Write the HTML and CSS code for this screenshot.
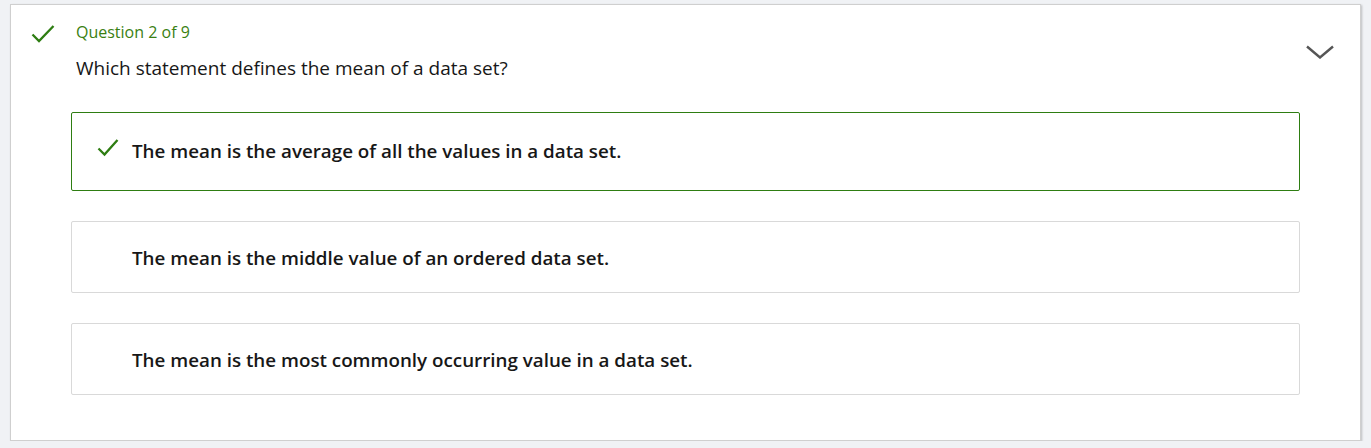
FILE: index.html
```html
<!DOCTYPE html>
<html lang="en">
<head>
<meta charset="utf-8">
<title>Question 2 of 9</title>
<link rel="stylesheet" href="styles.css">
</head>
<body>
<div class="card">
  <div class="head">
    <svg class="check-big" width="24" height="20" viewBox="0 0 24 20" aria-hidden="true">
      <path d="M1.5 10.5 L8 17 L22.5 2" fill="none" stroke="#2e7d12" stroke-width="2.3"/>
    </svg>
    <div class="qtext">
      <div class="label">Question 2 of 9</div>
      <div class="question">Which statement defines the mean of a data set?</div>
    </div>
    <svg class="chevron" width="28" height="14" viewBox="0 0 28 14" aria-hidden="true">
      <path d="M1 1.5 L14 12.5 L27 1.5" fill="none" stroke="#555" stroke-width="2.4"/>
    </svg>
  </div>
  <div class="options">
    <div class="option correct">
      <svg class="check-small" width="22" height="20" viewBox="0 0 22 20" aria-hidden="true">
        <path d="M1.5 10.5 L7.5 16.5 L20.5 2" fill="none" stroke="#2e7d12" stroke-width="2.3"/>
      </svg>
      <span class="otext">The mean is the average of all the values in a data set.</span>
    </div>
    <div class="option">
      <span class="otext">The mean is the middle value of an ordered data set.</span>
    </div>
    <div class="option">
      <span class="otext">The mean is the most commonly occurring value in a data set.</span>
    </div>
  </div>
</div>
</body>
</html>
```

FILE: styles.css
```css
html, body {
  margin: 0;
  padding: 0;
  background: #f0f2f5;
}
body {
  font-family: "Open Sans", "Noto Sans", "Liberation Sans", sans-serif;
  color: #171717;
  padding: 4px 10px 0 10px;
}
.card {
  background: #fff;
  border: 1px solid #cfcfcf;
  box-shadow: 1px 1px 2px rgba(0,0,0,0.22);
  padding: 16px 26px 45px 20px;
  height: 437px;
  box-sizing: border-box;
}
.head {
  display: flex;
  align-items: flex-start;
}
.check-big {
  flex: none;
  margin-top: 3px;
  margin-right: 21px;
}
.qtext {
  flex: 1;
}
.label {
  color: #3a7f12;
  font-size: 16px;
  line-height: 22px;
}
.question {
  font-size: 19px;
  line-height: 26px;
  margin-top: 12px;
}
.chevron {
  flex: none;
  margin-top: 24px;
}
.options {
  margin: 31px 34px 0 40px;
  display: flex;
  flex-direction: column;
  gap: 30px;
}
.option {
  border: 1px solid #d9d9d9;
  border-radius: 2px;
  padding: 23px 20px 21px 60px;
  display: flex;
  align-items: center;
  min-height: 26px;
}
.option.correct {
  border-color: #2e7d12;
  padding-top: 25px;
  padding-bottom: 26px;
  padding-left: 25px;
}
.check-small {
  flex: none;
  margin-right: 13px;
  margin-bottom: 6px;
}
.otext {
  font-size: 18.8px;
  font-weight: 600;
  line-height: 26px;
}
```
